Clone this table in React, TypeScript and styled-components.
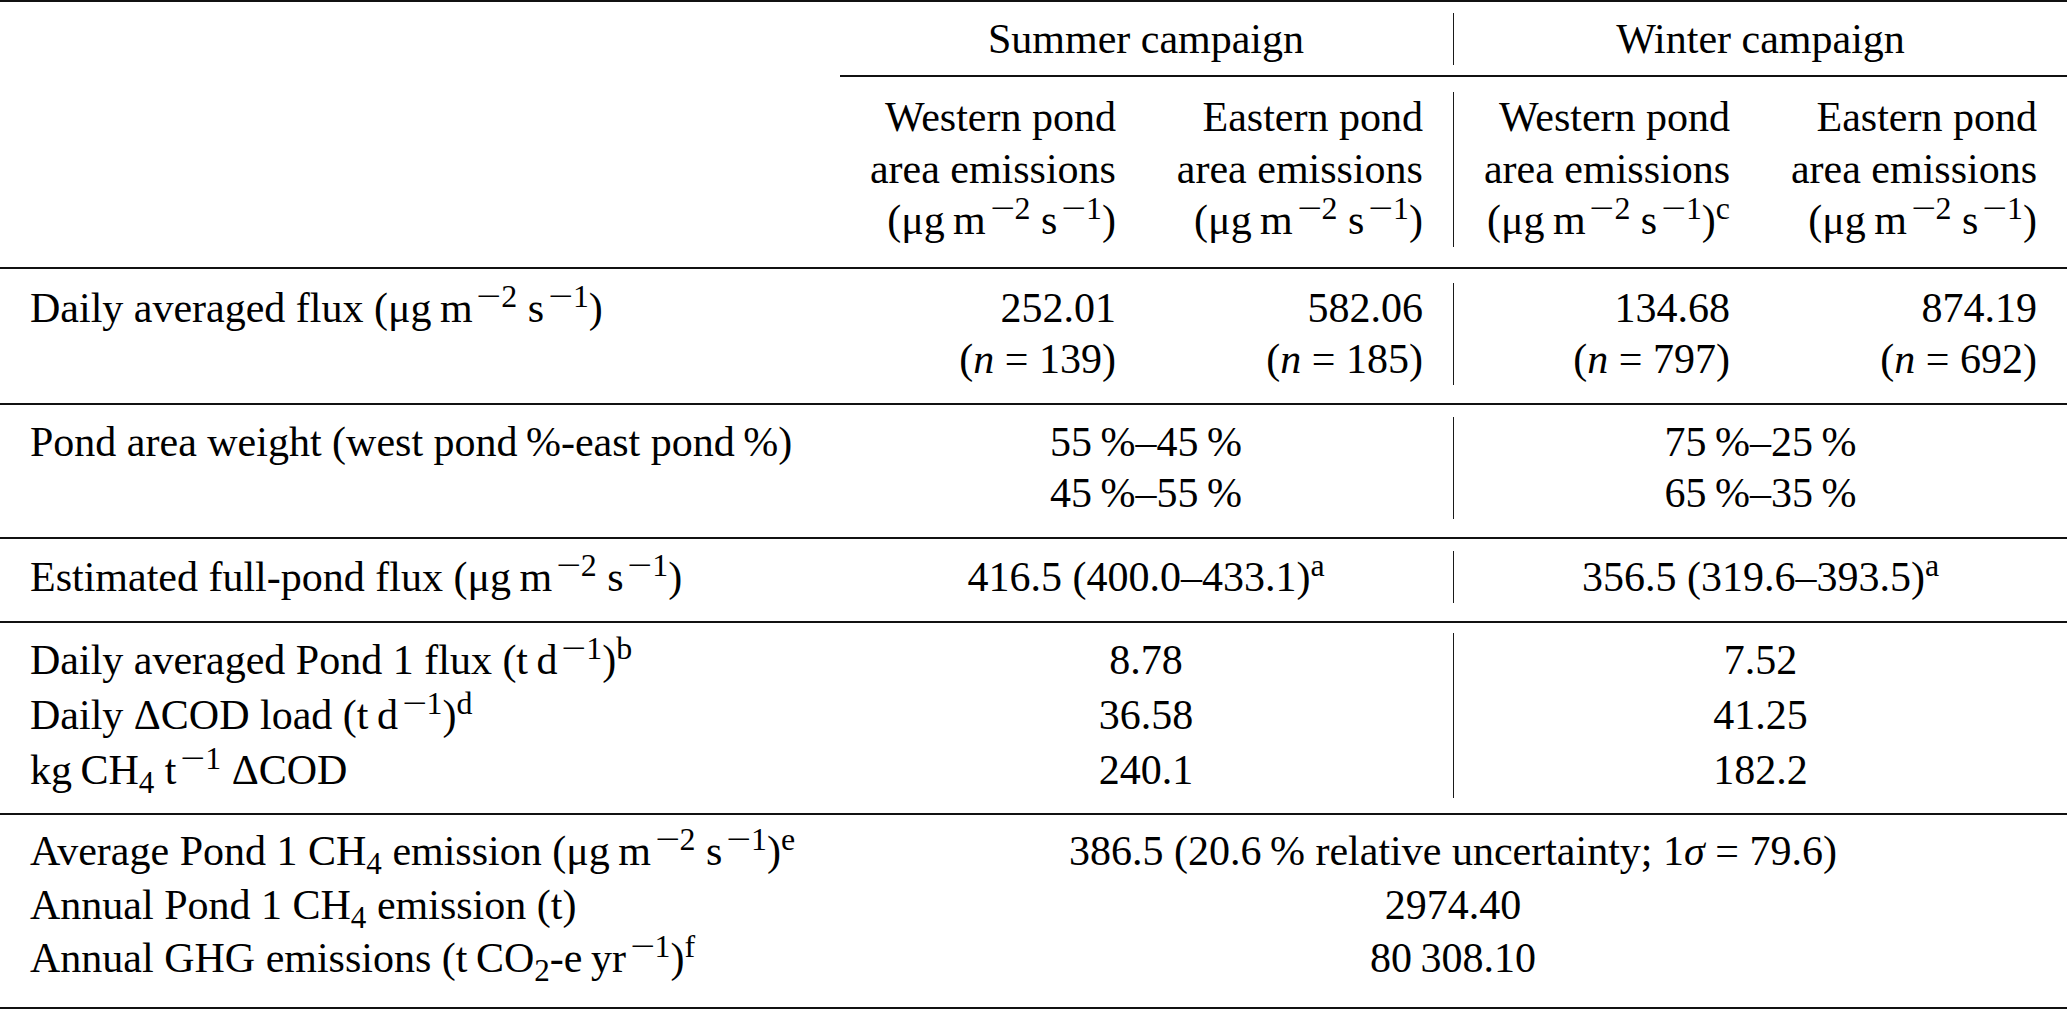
import React from "react";
import styled, { createGlobalStyle } from "styled-components";

const GlobalStyle = createGlobalStyle`
  html, body {
    margin: 0;
    padding: 0;
    background: #ffffff;
  }
  body {
    font-family: "Liberation Serif", "Times New Roman", serif;
    color: #000000;
  }
`;

const Table = styled.div`
  width: 2067px;
  font-size: 42px;
`;

const Rule = styled.div<{ indent?: number }>`
  height: 2px;
  background: #111111;
  margin-left: ${({ indent }) => indent ?? 0}px;
`;

const Group = styled.div<{ padTop: number; padBottom: number; lh: number }>`
  display: grid;
  grid-template-columns: 839px repeat(4, 1fr);
  padding: ${({ padTop }) => padTop}px 0 ${({ padBottom }) => padBottom}px;
  line-height: ${({ lh }) => lh}px;
`;

const Cell = styled.div<{
  align?: "left" | "right" | "center";
  span?: number;
  divider?: boolean;
}>`
  grid-column: span ${({ span }) => span ?? 1};
  padding: 0 30px;
  text-align: ${({ align }) => align ?? "right"};
  border-left: ${({ divider }) => (divider ? "1.5px solid #1a1a1a" : "none")};
  white-space: nowrap;
`;

const Line = styled.div``;

const Sup = styled.sup`
  font-size: 0.76em;
  line-height: 0;
  vertical-align: 0.48em;
`;

const Sub = styled.sub`
  font-size: 0.74em;
  line-height: 0;
  vertical-align: -0.3em;
`;

// TeX's math minus is wider than the text font's
const Minus = styled.span`
  display: inline-block;
  width: 0.78em;
  margin-left: 0.12em;
  text-align: center;
  line-height: 0;
  transform: scaleX(1.38);
`;

const Var = styled.i`
  font-style: italic;
`;

const Neg = ({ v }: { v: number }) => (
  <Sup>
    <Minus>−</Minus>
    {v}
  </Sup>
);

// μg m−2 s−1
const Flux = () => (
  <>
    μg{"\u2009"}m<Neg v={2} /> s<Neg v={1} />
  </>
);

const Lines = ({ items }: { items: React.ReactNode[] }) => (
  <>
    {items.map((it, i) => (
      <Line key={i}>{it}</Line>
    ))}
  </>
);

const N = ({ v }: { v: number }) => (
  <>
    (<Var>n</Var> = {v})
  </>
);

const App = () => (
  <>
    <GlobalStyle />
    <Table>
      <Rule />
      <Group padTop={11} padBottom={10} lh={52}>
        <Cell />
        <Cell span={2} align="center">
          Summer campaign
        </Cell>
        <Cell span={2} align="center" divider>
          Winter campaign
        </Cell>
      </Group>
      <Rule indent={840} />
      <Group padTop={15} padBottom={20.5} lh={51.5}>
        <Cell />
        <Cell>
          <Lines
            items={[
              "Western pond",
              "area emissions",
              <>
                (<Flux />)
              </>,
            ]}
          />
        </Cell>
        <Cell>
          <Lines
            items={[
              "Eastern pond",
              "area emissions",
              <>
                (<Flux />)
              </>,
            ]}
          />
        </Cell>
        <Cell divider>
          <Lines
            items={[
              "Western pond",
              "area emissions",
              <>
                (<Flux />)<Sup>c</Sup>
              </>,
            ]}
          />
        </Cell>
        <Cell>
          <Lines
            items={[
              "Eastern pond",
              "area emissions",
              <>
                (<Flux />)
              </>,
            ]}
          />
        </Cell>
      </Group>
      <Rule />
      <Group padTop={14} padBottom={18} lh={51}>
        <Cell align="left">
          Daily averaged flux (<Flux />)
        </Cell>
        <Cell>
          <Lines items={["252.01", <N v={139} />]} />
        </Cell>
        <Cell>
          <Lines items={["582.06", <N v={185} />]} />
        </Cell>
        <Cell divider>
          <Lines items={["134.68", <N v={797} />]} />
        </Cell>
        <Cell>
          <Lines items={["874.19", <N v={692} />]} />
        </Cell>
      </Group>
      <Rule />
      <Group padTop={12} padBottom={18} lh={51}>
        <Cell align="left">
          Pond area weight (west pond{"\u2009"}%-east pond{"\u2009"}%)
        </Cell>
        <Cell span={2} align="center">
          <Lines items={["55\u2009%–45\u2009%", "45\u2009%–55\u2009%"]} />
        </Cell>
        <Cell span={2} align="center" divider>
          <Lines items={["75\u2009%–25\u2009%", "65\u2009%–35\u2009%"]} />
        </Cell>
      </Group>
      <Rule />
      <Group padTop={12} padBottom={18} lh={52}>
        <Cell align="left">
          Estimated full-pond flux (<Flux />)
        </Cell>
        <Cell span={2} align="center">
          416.5 (400.0–433.1)<Sup>a</Sup>
        </Cell>
        <Cell span={2} align="center" divider>
          356.5 (319.6–393.5)<Sup>a</Sup>
        </Cell>
      </Group>
      <Rule />
      <Group padTop={10} padBottom={15} lh={55}>
        <Cell align="left">
          <Lines
            items={[
              <>
                Daily averaged Pond 1 flux (t{"\u2009"}d<Neg v={1} />)<Sup>b</Sup>
              </>,
              <>
                Daily ΔCOD load (t{"\u2009"}d<Neg v={1} />)<Sup>d</Sup>
              </>,
              <>
                kg{"\u2009"}CH<Sub>4</Sub> t<Neg v={1} /> ΔCOD
              </>,
            ]}
          />
        </Cell>
        <Cell span={2} align="center">
          <Lines items={["8.78", "36.58", "240.1"]} />
        </Cell>
        <Cell span={2} align="center" divider>
          <Lines items={["7.52", "41.25", "182.2"]} />
        </Cell>
      </Group>
      <Rule />
      <Group padTop={10} padBottom={21.5} lh={53.5}>
        <Cell align="left">
          <Lines
            items={[
              <>
                Average Pond 1 CH<Sub>4</Sub> emission (<Flux />)<Sup>e</Sup>
              </>,
              <>
                Annual Pond 1 CH<Sub>4</Sub> emission (t)
              </>,
              <>
                Annual GHG emissions (t{"\u2009"}CO<Sub>2</Sub>-e{"\u2009"}yr
                <Neg v={1} />)<Sup>f</Sup>
              </>,
            ]}
          />
        </Cell>
        <Cell span={4} align="center">
          <Lines
            items={[
              <>
                386.5 (20.6{"\u2009"}% relative uncertainty; 1<Var>σ</Var> = 79.6)
              </>,
              "2974.40",
              "80\u2009308.10",
            ]}
          />
        </Cell>
      </Group>
      <Rule />
    </Table>
  </>
);

export default App;
